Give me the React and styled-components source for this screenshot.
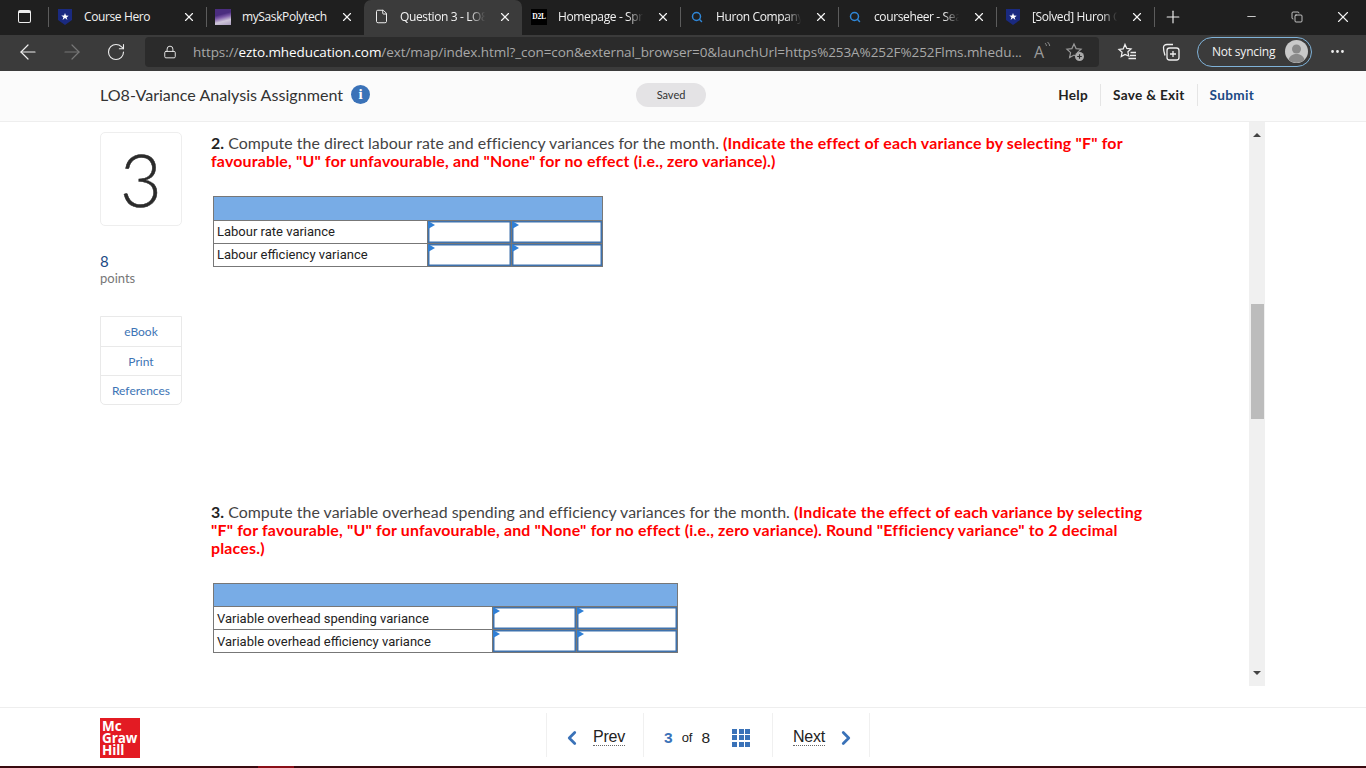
import React from "react";
import styled, { createGlobalStyle } from "styled-components";
import { ArrowLeft, ArrowRight, RotateCw, Lock, File, Search, X, Plus, Minus, Ellipsis, ChevronLeft, ChevronRight, Copy } from "lucide-react";

const Global = createGlobalStyle`
  html, body { margin: 0; padding: 0; height: 768px; overflow: hidden; background: #fff; }
  body { font-family: "Lato", "Open Sans", sans-serif; }
  #root { height: 768px; }
  * { box-sizing: border-box; }
`;
const Page = styled.div`display:flex;flex-direction:column;width:1366px;height:768px;overflow:hidden;`;
const TabBar = styled.div`display:flex;align-items:stretch;height:35px;background:#1f1f1f;flex:none;`;
const TabStrip = styled.div`width:48px;display:flex;align-items:center;justify-content:center;padding-bottom:2px;color:#fff;`;
const TabSquare = styled.div`width:13px;height:13px;border:1.3px solid #eee;border-radius:2px;border-top-width:3px;`;
const Tab = styled.div`
  width:158px;height:35px;display:flex;align-items:center;padding:0 10px 2px 9px;gap:11px;position:relative;flex:none;
  color:#f2f2f2;font:12px "Open Sans",sans-serif;letter-spacing:-.38px;
  background:${p=>p.$active?"#3b3b3b":"transparent"};
  border-radius:${p=>p.$active?"7px 7px 0 0":"0"};
  &::before{content:"";position:absolute;left:0;top:7px;height:20px;width:1px;background:${p=>p.$active||p.$noSep?"transparent":"#5c5c5c"};}
`;
const TabIconBox = styled.span`width:16px;height:16px;flex:none;display:flex;align-items:center;justify-content:center;`;
const TabTitle = styled.span`flex:1;white-space:nowrap;overflow:hidden;${p=>p.$fade?"-webkit-mask-image:linear-gradient(90deg,#000 80%,transparent 98%);mask-image:linear-gradient(90deg,#000 80%,transparent 98%);":""}`;
const TabClose = styled(X)`flex:none;width:14px;height:14px;color:#f5f5f5;`;
const Purple = styled.span`width:16px;height:16px;background:linear-gradient(165deg,#4b2d7f 0 35%,#7d5aa8 50%,#cfc6d9 72%,#a99bbd);display:block;`;
const D2L = styled.span`width:16px;height:16px;background:#000;color:#fff;font:700 7.5px "Liberation Serif",serif;display:flex;align-items:center;justify-content:center;letter-spacing:-.3px;`;
const NewTab = styled.div`width:36px;border-left:1px solid #5c5c5c;display:flex;align-items:center;justify-content:center;margin:7px 0 8px;color:#eee;`;
const Spacer = styled.div`flex:1;`;
const WinBtn = styled.div`width:46px;display:flex;align-items:center;justify-content:center;padding-bottom:2px;color:#f2f2f2;`;
const Toolbar = styled.div`display:flex;align-items:center;height:36px;background:#3b3b3b;flex:none;padding:0 0 3px 6px;`;
const NavBtn = styled.div`width:44px;display:flex;justify-content:center;color:${p=>p.$dim?"#777":"#eee"};`;
const AddressBar = styled.div`width:954px;height:30px;margin-left:7px;background:#2b2b2b;border-radius:4px;display:flex;align-items:center;padding:0 0 0 18px;color:#a8a8a8;font:13.5px "Open Sans",sans-serif;letter-spacing:-.08px;`;
const UrlText = styled.span`margin-left:16px;white-space:nowrap;width:830px;overflow:hidden;`;
const Host = styled.span`color:#fff;`;
const ReadAloud = styled.span`margin-left:11px;display:flex;align-items:flex-start;font-size:16px;color:#999;`;
const AddFav = styled.span`margin-left:14px;display:flex;color:#999;`;
const TbIcon = styled.div`width:44px;display:flex;justify-content:center;color:#eee;margin-left:${p=>p.$ml||0}px;`;
const Profile = styled.div`width:115px;height:30px;border:1.5px solid #7fb2d8;border-radius:15px;margin-left:4px;display:flex;align-items:center;justify-content:space-between;padding:0 3px 0 14px;color:#f2f2f2;font:12px "Open Sans",sans-serif;letter-spacing:-.2px;`;
const Avatar = styled.svg`width:23px;height:23px;flex:none;`;
const Dots = styled.div`width:50px;display:flex;justify-content:center;color:#eee;`;

const AppHeader = styled.header`height:51px;flex:none;background:#fbfbfb;border-bottom:1px solid #eee;display:grid;grid-template-columns:536px 70px 1fr;align-items:center;padding:0 112px 3px 100px;`;
const TitleWrap = styled.div`display:flex;align-items:center;gap:8px;`;
const Title = styled.h1`margin:0;font:400 16.1px "Lato",sans-serif;color:#333;`;
const Info = styled.span`width:19px;height:19px;border-radius:50%;background:#3a72b8;color:#fff;font:700 15px "Liberation Serif",serif;display:flex;align-items:center;justify-content:center;`;
const Pill = styled.div`height:24px;border-radius:12px;background:#e4e3e5;color:#333;font-size:11px;display:flex;align-items:center;justify-content:center;`;
const HeaderNav = styled.nav`display:flex;justify-content:flex-end;align-items:center;`;
const HeaderLink = styled.a`font:700 13.6px "Lato",sans-serif;letter-spacing:.3px;color:${p=>p.$blue?"#1b4a85":"#222"};padding:2px 12px;height:22px;display:flex;align-items:center;border-left:${p=>p.$first?"none":"1px solid #e5e5e5"};&:last-child{padding-right:0;}`;

const Main = styled.main`flex:1;min-height:0;display:flex;padding-left:100px;padding-right:101px;overflow:hidden;`;
const Side = styled.aside`width:82px;flex:none;padding-top:10px;`;
const NumBox = styled.div`height:94px;border:1px solid #eee;border-radius:5px;display:flex;align-items:center;justify-content:center;font:300 72px "Lato",sans-serif;-webkit-text-stroke:.5px #2b2b2b;color:#2b2b2b;background:#fff;`;
const Pts = styled.div`margin-top:26px;font-size:15px;line-height:18px;color:#1b4a85;`;
const PtsLabel = styled.div`font-size:13px;line-height:16px;color:#777;`;
const Links = styled.div`margin-top:30px;border:1px solid #e9e9e9;border-radius:0 0 5px 5px;`;
const LinkRow = styled.a`display:flex;height:29px;align-items:center;justify-content:center;font-size:12px;color:#3d74b5;border-top:${p=>p.$first?"none":"1px solid #e9e9e9"};`;
const Content = styled.div`flex:1;min-width:0;padding:12px 92px 0 29px;`;
const Question = styled.p`margin:0;font-size:15.9px;line-height:18px;color:#444;letter-spacing:.03px;`;
const Num = styled.b`color:#222;`;
const Red = styled.b`color:#f00;font-weight:700;letter-spacing:.19px;`;
const Sheet = styled.table`
  margin:26px 0 ${p=>p.$after}px 2px;border-collapse:collapse;table-layout:fixed;width:${p=>p.$w}px;
  font:13px "Roboto",sans-serif;color:#222;border:1.5px solid #777;
`;
const HeadCell = styled.td`height:23.5px;background:#78ace6;padding:0;`;
const HeadRow = styled.tr`border-bottom:1.5px solid #777;`;
const LabelCell = styled.td`height:23px;padding:0 3px;border:1px solid #777;white-space:nowrap;`;
const EntryCell = styled.td`height:23px;padding:0;border:1px solid #777;position:relative;background:#fff;box-shadow:inset 0 0 0 1.5px #3f72ad;`;
const Flag = styled.span`position:absolute;z-index:1;left:0;top:0;width:0;height:0;border-left:7px solid #2f7fd6;border-top:4.5px solid transparent;border-bottom:4.5px solid transparent;`;
const ScrollBar = styled.div`width:16px;flex:none;background:#f0f0f0;display:flex;flex-direction:column;align-items:center;margin-bottom:21px;`;
const Arrow = styled.div`height:15px;flex:none;width:100%;display:flex;justify-content:center;align-items:${p=>p.$down?"flex-start":"flex-end"};`;
const ArrowTri = styled.span`width:0;height:0;border-left:4px solid transparent;border-right:4px solid transparent;${p=>p.$down?"border-top:4px solid #444;":"border-bottom:4px solid #444;"}`;
const ScrollGap = styled.div`flex:${p=>p.$n};`;
const Thumb = styled.div`width:13px;height:115px;background:#bcbcbc;flex:none;`;

const Footer = styled.footer`height:59px;flex:none;border-top:1px solid #eee;display:grid;grid-template-columns:446px 324px;padding:10px 0 0 100px;align-items:start;background:#fff;`;
const Logo = styled.div`width:40px;height:40px;background:#e31b23;color:#fff;font:700 13.5px/12px "Open Sans",sans-serif;letter-spacing:-.1px;padding:2px 0 0 2px;`;
const Pager = styled.nav`display:grid;grid-template-columns:97px 129px 98px;height:44px;margin-top:-5px;border-right:1px solid #f0f0f0;`;
const PagerCell = styled.div`border-left:1px solid #f0f0f0;display:flex;align-items:center;justify-content:${p=>p.$j||"flex-start"};gap:${p=>p.$g||10}px;padding:5px 0 0 ${p=>p.$pl||0}px;color:#222;font:15.5px "Liberation Sans",sans-serif;`;
const Dotted = styled.span`font-size:16px;letter-spacing:-.2px;border-bottom:1px dotted #666;line-height:14px;padding-bottom:1px;`;
const Page3 = styled.b`color:#3a72b8;font-size:15.5px;`;
const Of = styled.span`font-size:13px;`;
const GridIcon = styled.span`display:grid;grid-template-columns:repeat(3,5px);grid-auto-rows:5px;gap:1.5px;margin-left:13px;`;
const GridDot = styled.i`background:#3a72b8;display:block;`;
const BottomBar = styled.div`height:2px;flex:none;background:linear-gradient(90deg,#3a0a10 0 258px,#8a0f18 258px 294px,#3a0a10 294px);`;

const Shield = () => (
  <svg width="14" height="16" viewBox="0 0 14 16"><path d="M0 0h14v11l-7 5-7-5z" fill="#1a2a80"/><path d="M7 4l1 2.6 2.7.1-2.1 1.7.8 2.6L7 9l-2.4 1.9.8-2.6-2.1-1.7 2.7-.1z" fill="#fff"/></svg>
);
const SearchIcon = () => <Search size={12} color="#2f86d6" strokeWidth={3}/>;
const STAR = "M9 2l2.1 4.6 5 .6-3.7 3.4 1 5L9 13.1 4.6 15.6l1-5L1.9 7.2l5-.6z";
const FavAdd = () => (
  <svg width="20" height="20" viewBox="0 0 20 20" fill="none"><path d={STAR} stroke="currentColor" strokeWidth="1.2"/><circle cx="14.5" cy="14.5" r="4.5" fill="#aaa"/><path d="M14.5 12.2v4.6M12.2 14.5h4.6" stroke="#2b2b2b" strokeWidth="1.1"/></svg>
);
const FavList = () => (
  <svg width="20" height="20" viewBox="0 0 20 20" fill="none" stroke="currentColor" strokeWidth="1.3"><path d="M8 2.5l1.8 3.9 4.2.5-3.1 2.9.8 4.2L8 12.4l-3.7 2.1.8-4.2L2 7.400l4.200-.5z"/><path d="M13.500 10.500H19M13 13.500h6M11.500 16.500H19"/></svg>
);
const Collections = () => (
  <svg width="20" height="20" viewBox="0 0 20 20" fill="none" stroke="currentColor" strokeWidth="1.3"><path d="M4 13.500C2.800 10 2.500 7 2.500 5.500 2.500 3.500 4 2.500 6 2.500h6"/><rect x="6" y="6" width="12" height="12" rx="2.500"/><path d="M12 9v6M9 12h6"/></svg>
);
const Waves = () => (
  <svg width="7" height="10" viewBox="0 0 7 10" fill="none" stroke="currentColor" strokeWidth=".9"><path d="M1 2c1 1 1.300 2 1.500 3M3.500 1C5 2.500 5.500 3.500 5.700 5"/></svg>
);

const tabs = [
  { t:"Course Hero", i:<Shield/> },
  { t:"mySaskPolytech", i:<Purple/> },
  { t:"Question 3 - LO8-Variance", i:<File size={15} color="#eee" strokeWidth={1.6}/>, active:true, fade:true },
  { t:"Homepage - Spring 2022", i:<D2L>D2L</D2L>, noSep:true, fade:true },
  { t:"Huron Company applies", i:<SearchIcon/>, fade:true },
  { t:"courseheer - Search", i:<SearchIcon/>, fade:true },
  { t:"[Solved] Huron Company", i:<Shield/>, fade:true },
];

const Table = ({ w, cols, rows, after }) => (
  <Sheet $w={w} $after={after}>
    <colgroup>{cols.map(c => <col key={c} style={{ width: c }} />)}</colgroup>
    <tbody>
      <HeadRow><HeadCell colSpan={3} /></HeadRow>
      {rows.map(r => (
        <tr key={r}>
          <LabelCell>{r}</LabelCell>
          <EntryCell><Flag /></EntryCell>
          <EntryCell><Flag /></EntryCell>
        </tr>
      ))}
    </tbody>
  </Sheet>
);

export default function App() {
  return (
    <Page>
      <Global />
      <TabBar>
        <TabStrip><TabSquare /></TabStrip>
        {tabs.map(x => (
          <Tab key={x.t} $active={x.active} $noSep={x.noSep}>
            <TabIconBox>{x.i}</TabIconBox>
            <TabTitle $fade={x.fade}>{x.t}</TabTitle>
            <TabClose strokeWidth={2} />
          </Tab>
        ))}
        <NewTab><Plus size={20} strokeWidth={1.4} /></NewTab>
        <Spacer />
        <WinBtn><Minus size={13} strokeWidth={1.5} /></WinBtn>
        <WinBtn><Copy size={12} strokeWidth={1.5} /></WinBtn>
        <WinBtn><X size={18} strokeWidth={1.5} /></WinBtn>
      </TabBar>
      <Toolbar>
        <NavBtn><ArrowLeft size={24} strokeWidth={1.2} /></NavBtn>
        <NavBtn $dim><ArrowRight size={24} strokeWidth={1.2} /></NavBtn>
        <NavBtn><RotateCw size={20} strokeWidth={1.3} /></NavBtn>
        <AddressBar>
          <Lock size={14} color="#eee" strokeWidth={1.6} />
          <UrlText>https://<Host>ezto.mheducation.com</Host>/ext/map/index.html?_con=con&amp;external_browser=0&amp;launchUrl=https%253A%252F%252Flms.mhedu...</UrlText>
          <ReadAloud>A<Waves /></ReadAloud>
          <AddFav><FavAdd /></AddFav>
        </AddressBar>
        <TbIcon $ml={6}><FavList /></TbIcon>
        <TbIcon><Collections /></TbIcon>
        <Profile>Not syncing
          <Avatar viewBox="0 0 23 23"><circle cx="11.500" cy="11.500" r="11.500" fill="#c9c9c9"/><circle cx="11.500" cy="9" r="4.500" fill="#8a8a8a"/><path d="M3.500 19.500c1.500-4 4.500-5.500 8-5.500s6.500 1.500 8 5.500a11.500 11.500 0 0 1-16 0z" fill="#8a8a8a"/></Avatar>
        </Profile>
        <Dots><Ellipsis size={17} /></Dots>
      </Toolbar>
      <AppHeader>
        <TitleWrap><Title>LO8-Variance Analysis Assignment</Title><Info>i</Info></TitleWrap>
        <Pill>Saved</Pill>
        <HeaderNav>
          <HeaderLink $first>Help</HeaderLink>
          <HeaderLink>Save &amp; Exit</HeaderLink>
          <HeaderLink $blue>Submit</HeaderLink>
        </HeaderNav>
      </AppHeader>
      <Main>
        <Side>
          <NumBox>3</NumBox>
          <Pts>8</Pts>
          <PtsLabel>points</PtsLabel>
          <Links>
            <LinkRow $first>eBook</LinkRow>
            <LinkRow>Print</LinkRow>
            <LinkRow>References</LinkRow>
          </Links>
        </Side>
        <Content>
          <Question><Num>2.</Num> Compute the direct labour rate and efficiency variances for the month. <Red>(Indicate the effect of each variance by selecting "F" for favourable, "U" for unfavourable, and "None" for no effect (i.e., zero variance).)</Red></Question>
          <Table w={389} cols={[214, 84, 91]} after={236} rows={["Labour rate variance", "Labour efficiency variance"]} />
          <Question><Num>3.</Num> Compute the variable overhead spending and efficiency variances for the month. <Red>(Indicate the effect of each variance by selecting "F" for favourable, "U" for unfavourable, and "None" for no effect (i.e., zero variance). Round "Efficiency variance" to 2 decimal places.)</Red></Question>
          <Table w={464} cols={[279, 84, 101]} after={0} rows={["Variable overhead spending variance", "Variable overhead efficiency variance"]} />
        </Content>
        <ScrollBar>
          <Arrow><ArrowTri /></Arrow>
          <ScrollGap $n={167} />
          <Thumb />
          <ScrollGap $n={252} />
          <Arrow $down><ArrowTri $down /></Arrow>
        </ScrollBar>
      </Main>
      <Footer>
        <Logo>Mc<br />Graw<br />Hill</Logo>
        <Pager>
          <PagerCell $pl={14}><ChevronLeft size={22} color="#3a72b8" strokeWidth={3} /><Dotted>Prev</Dotted></PagerCell>
          <PagerCell $g={9} $pl={20}><Page3>3</Page3><Of>of</Of><span>8</span><GridIcon>{Array.from({ length: 9 }, (_, i) => <GridDot key={i} />)}</GridIcon></PagerCell>
          <PagerCell $pl={20}><Dotted>Next</Dotted><ChevronRight size={22} color="#3a72b8" strokeWidth={3} /></PagerCell>
        </Pager>
      </Footer>
      <BottomBar />
    </Page>
  );
}
